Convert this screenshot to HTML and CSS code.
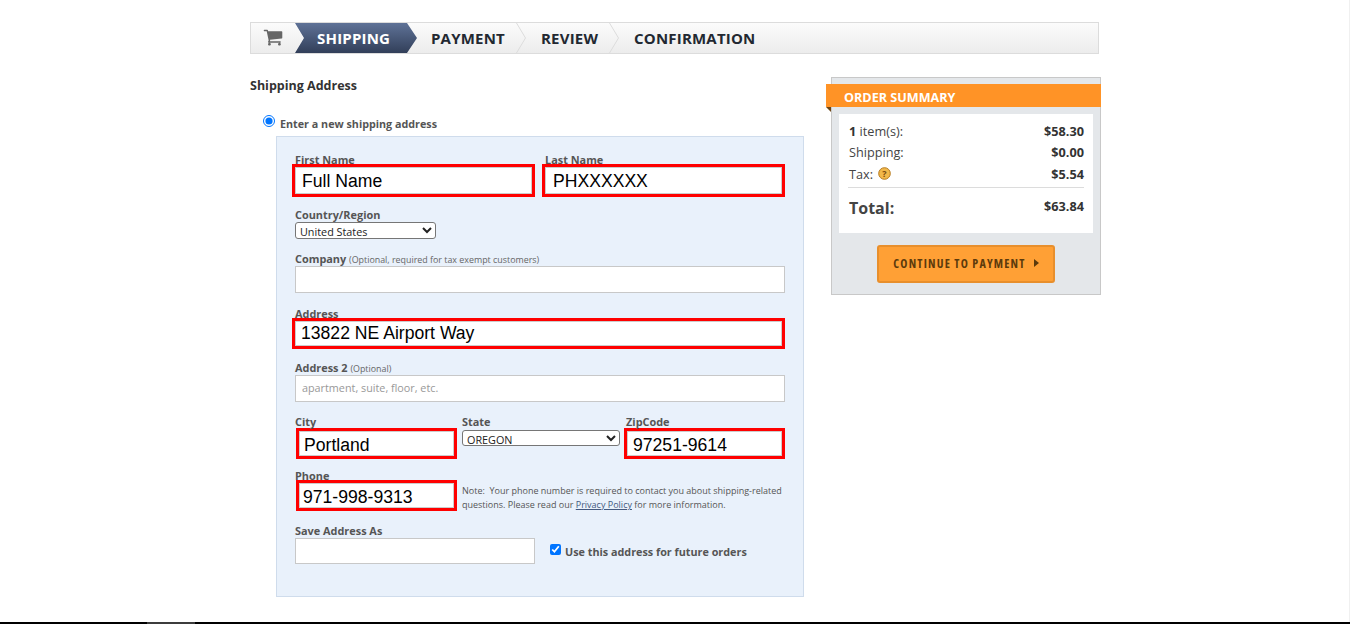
FILE: index.html
```html
<!DOCTYPE html>
<html lang="en">
<head>
<meta charset="utf-8">
<title>Shipping Address</title>
<link rel="stylesheet" href="styles.css">
</head>
<body>
<div class="page">
  <div class="wrap">
    <nav class="steps">
      <div class="cart">
        <svg viewBox="0 0 1792 1792" width="20" height="20"><path fill="#666" d="M704 1536q0 52-38 90t-90 38-90-38-38-90 38-90 90-38 90 38 38 90zm896 0q0 52-38 90t-90 38-90-38-38-90 38-90 90-38 90 38 38 90zm128-1088v512q0 24-16.500 42.500t-40.500 21.500l-1044 122q13 60 13 70 0 16-24 64h920q26 0 45 19t19 45-19 45-45 19h-1024q-26 0-45-19t-19-45q0-11 8-31.500t16-36 21.500-40 15.500-29.500l-177-823h-204q-26 0-45-19t-19-45 19-45 45-19h256q16 0 28.500 6.500t19.500 15.500 13 24.500 8 26 5.500 29.500 4.500 26h1201q26 0 45 19t19 45z"/></svg>
      </div>
      <div class="step step-active">SHIPPING</div>
      <div class="step step-payment">PAYMENT<svg class="sep" viewBox="0 0 10 30" width="10" height="30"><polyline points="0.5,0 9.500,15 0.500,30" fill="none" stroke="#dcdcdc"/></svg></div>
      <div class="step step-review">REVIEW<svg class="sep" viewBox="0 0 10 30" width="10" height="30"><polyline points="0.5,0 9.500,15 0.500,30" fill="none" stroke="#dcdcdc"/></svg></div>
      <div class="step step-confirm">CONFIRMATION</div>
    </nav>

    <div class="columns">
      <main class="main">
        <h1 class="title">Shipping Address</h1>
        <label class="radio-line"><input type="radio" name="addr" checked><span>Enter a new shipping address</span></label>

        <form class="panel">
          <div class="row row-names">
            <div class="col-half">
              <div class="lbl">First Name</div>
              <div class="hl hl-name">Full Name</div>
            </div>
            <div class="col-half col-last">
              <div class="lbl">Last Name</div>
              <div class="hl hl-name hl-last">PHXXXXXX</div>
            </div>
          </div>

          <div class="row row-country">
            <div class="lbl">Country/Region</div>
            <select class="sel sel-country"><option>United States</option></select>
          </div>

          <div class="row row-company">
            <div class="lbl">Company <small>(Optional, required for tax exempt customers)</small></div>
            <input class="txt" type="text">
          </div>

          <div class="row row-address">
            <div class="lbl">Address</div>
            <div class="hl hl-address">13822 NE Airport Way</div>
          </div>

          <div class="row row-address2">
            <div class="lbl">Address 2 <small>(Optional)</small></div>
            <input class="txt" type="text" placeholder="apartment, suite, floor, etc.">
          </div>

          <div class="row row-city">
            <div class="col-city">
              <div class="lbl">City</div>
              <div class="hl hl-city">Portland</div>
            </div>
            <div class="col-state">
              <div class="lbl">State</div>
              <select class="sel sel-state"><option>OREGON</option></select>
            </div>
            <div class="col-zip">
              <div class="lbl">ZipCode</div>
              <div class="hl hl-zip">97251-9614</div>
            </div>
          </div>

          <div class="row row-phone">
            <div class="col-city">
              <div class="lbl">Phone</div>
              <div class="hl hl-phone">971-998-9313</div>
            </div>
            <p class="note">Note:&nbsp; Your phone number is required to contact you about shipping-related questions. Please read our <a href="#">Privacy Policy</a> for more information.</p>
          </div>

          <div class="row row-save">
            <div class="col-save">
              <div class="lbl">Save Address As</div>
              <input class="txt" type="text">
            </div>
            <label class="check-line"><input type="checkbox" checked><span>Use this address for future orders</span></label>
          </div>
        </form>
      </main>

      <aside class="summary">
        <div class="ribbon">ORDER SUMMARY</div>
        <div class="totals">
          <div class="line"><span><b>1</b> item(s):</span><b>$58.30</b></div>
          <div class="line"><span>Shipping:</span><b>$0.00</b></div>
          <div class="line"><span class="tax">Tax:
            <svg viewBox="0 0 13 13" width="13" height="13"><circle cx="6.500" cy="6.500" r="5.800" fill="#f2b84a" stroke="#b57a1e"/><text x="6.500" y="9.800" text-anchor="middle" class="q">?</text></svg></span><b>$5.54</b></div>
          <div class="line line-total"><span class="total-label">Total:</span><b>$63.84</b></div>
        </div>
        <button class="cta" type="button">CONTINUE TO PAYMENT<svg viewBox="0 0 5 8" width="5" height="8"><polygon points="0,0 5,4 0,8" fill="#5c3a0c"/></svg></button>
      </aside>
    </div>
  </div>
</div>
<div class="bottom-bar"><div class="bottom-thumb"></div></div>
</body>
</html>
```

FILE: styles.css
```css
* { box-sizing: border-box; }
html, body { margin: 0; padding: 0; height: 624px; overflow: hidden; background: #fff; }
body { font-family: "Open Sans", sans-serif; color: #444; }

.page { height: 622px; border-right: 1px solid #f0f0f0; padding: 22px 0 0 250px; overflow: hidden; }
.wrap { width: 851px; }

/* Steps */
.steps {
  display: flex; align-items: stretch; width: 849px; height: 32px;
  border: 1px solid #dcdcdc;
  background: linear-gradient(#fbfbfb, #ececec);
}
.cart { width: 44px; display: flex; align-items: center; padding: 0 0 2px 12px; }
.step {
  position: relative; display: flex; align-items: center;
  font-size: 15px; font-weight: 700; letter-spacing: .2px; color: #222831;
}
.step-active {
  width: 122px; padding-left: 22px; color: #fff;
  background: linear-gradient(#5f7297, #323f59);
  clip-path: polygon(0 0, 112px 0, 122px 50%, 112px 100%, 0 100%, 9px 50%);
}
.step-payment { width: 109px; padding-left: 14px; }
.step-review { width: 93px; padding-left: 15px; }
.step-confirm { padding-left: 15px; }
.sep { position: absolute; right: 0; top: 0; }

/* Columns */
.columns { display: flex; justify-content: space-between; }
.main { width: 554px; }
.title { margin: 23px 0 0; font-size: 12.500px; line-height: 18px; font-weight: 700; color: #333; }
.radio-line { display: flex; align-items: center; margin: 19px 0 0 13px; height: 20px; }
.radio-line input { margin: 0 5px 0 0; width: 12px; height: 12px; position: relative; top: -3px; }
.radio-line span { font-size: 10.750px; font-weight: 700; color: #555; }

/* Panel */
.panel {
  margin: 2px 0 0 26px; width: 528px; height: 461px;
  padding: 17px 18px 0 18px;
  background: #e9f1fb; border: 1px solid #cfdcec;
}
.row { display: block; }
.lbl { font-size: 10.900px; line-height: 11px; font-weight: 700; color: #555; }
.lbl small { font-size: 8.900px; font-weight: 400; color: #666; }

.txt {
  display: block; width: 100%; height: 27px; margin: 0; padding: 0 6px 2px;
  border: 1px solid #c8c8c8; background: #fff; font: 400 10.800px "Open Sans", sans-serif; color: #444;
}
.txt::placeholder { color: #999; opacity: 1; }
.sel {
  display: block; height: 17px; padding: 0 0 1px; margin: 0;
  font: 400 10.800px "Open Sans", sans-serif; color: #222; background: #fff;
  border: 1px solid #767676; border-radius: 3px;
}
.sel-country { width: 141px; margin-top: 2px; }
.sel-state { width: 158px; height: 16px; margin-top: 3px; padding: 0; }

/* Highlighted fields */
.hl {
  display: flex; align-items: center; height: 31px;
  border: 3px solid #f00; background: #fff; box-shadow: inset 0 0 0 1px #ccc;
  font-family: "Liberation Sans", Arial, sans-serif; font-size: 17.600px; color: #000;
  padding-left: 7px;
}

.row-names { display: flex; justify-content: space-between; }
.col-half { width: 243px; }
.col-half .hl { margin-left: -3px; width: 243px; }
.col-last { width: 240px; }
.hl-name { height: 33px; margin-top: -1px; padding-top: 1px; }
.hl-last { padding-left: 8px; }

.row-country { margin-top: 12px; }
.row-company { margin-top: 14px; }
.row-address { margin-top: 15px; }
.hl-address { margin: -1px 0 0 -3px; width: 493px; padding: 0 0 1px 6px; }
.row-address2 { margin-top: 13px; }
.row-address2 .lbl { margin-bottom: 1px; }
.row-company .lbl { margin-bottom: 1px; }

.row-city { display: flex; margin-top: 14px; height: 37px; }
.col-city { width: 167px; flex: none; }
.col-state { width: 164px; flex: none; }
.col-zip { width: 159px; flex: none; }
.hl-city, .hl-phone { width: 161px; margin-left: 1px; padding: 3px 0 0 5px; }
.hl-city { margin-top: 1px; }
.hl-zip { margin: 1px 0 0 -2px; width: 161px; padding: 3px 0 0 6px; }
.row-phone { display: flex; margin-top: 17px; }
.hl-phone { padding-left: 4px; margin-top: -1px; }
.note { flex: none; margin: 14px 0 0; width: 323px; font-size: 9px; line-height: 14px; color: #555; }
.note a { color: #44597f; }

.row-save { display: flex; margin-top: 13px; }
.col-save { width: 240px; flex: none; }
.col-save .lbl { margin-bottom: 2px; }
.col-save .txt { height: 26px; }
.check-line { display: flex; align-items: center; margin: 18px 0 0 15px; height: 16px; }
.check-line input { margin: 0 4px 0 0; width: 11px; height: 11px; position: relative; top: -2px; }
.check-line span { font-size: 10.800px; font-weight: 700; color: #555; }

/* Summary */
.summary {
  position: relative; width: 270px; height: 218px; margin-top: 23px;
  background: #e4e7ea; border: 1px solid #c8c8c8;
  padding: 6px 7px 0;
}
.ribbon {
  position: relative; margin: 0 -8px 0 -13px; height: 23px; padding-left: 18px;
  background: #ff9326; color: #fff; font-size: 12.600px; font-weight: 700; line-height: 28px;
}
.ribbon::after {
  content: ""; position: absolute; left: 0; top: 23px; width: 0; height: 0;
  border-top: 5px solid #6b4414; border-left: 5px solid transparent;
}
.totals {
  margin-top: 7px; height: 119px; background: #fff; padding: 6px 9px 0;
  font-size: 12.700px; color: #444;
}
.line { display: flex; justify-content: space-between; align-items: center; height: 21.500px; }
.line > span { margin-left: 1px; }
.line b { font-weight: 700; color: #333; }
.tax { display: inline-flex; align-items: center; gap: 5px; }
.q { font: 700 9px "Open Sans", sans-serif; fill: #7a4d0e; }
.line-total {
  height: 40px; border-top: 1px solid #dcdcdc; margin-top: 2px; align-items: flex-start; padding-top: 9px;
}
.total-label { font-size: 16px; font-weight: 700; color: #444; line-height: 28px; margin-top: -3px; }
.cta {
  display: flex; align-items: center; justify-content: center; gap: 8px;
  width: 178px; height: 38px; margin: 12px 0 0 38px; padding: 0 0 2px;
  background: #ffa035; border: 2px solid #e88f2c; border-radius: 3px;
  font: 700 12px "Open Sans", sans-serif; font-stretch: 75%; letter-spacing: 1.200px; color: #5c3a0c;
}

.bottom-bar { height: 2px; background: #000; padding-left: 147px; }
.bottom-thumb { width: 48px; height: 2px; background: #3c3c3c; }
```
